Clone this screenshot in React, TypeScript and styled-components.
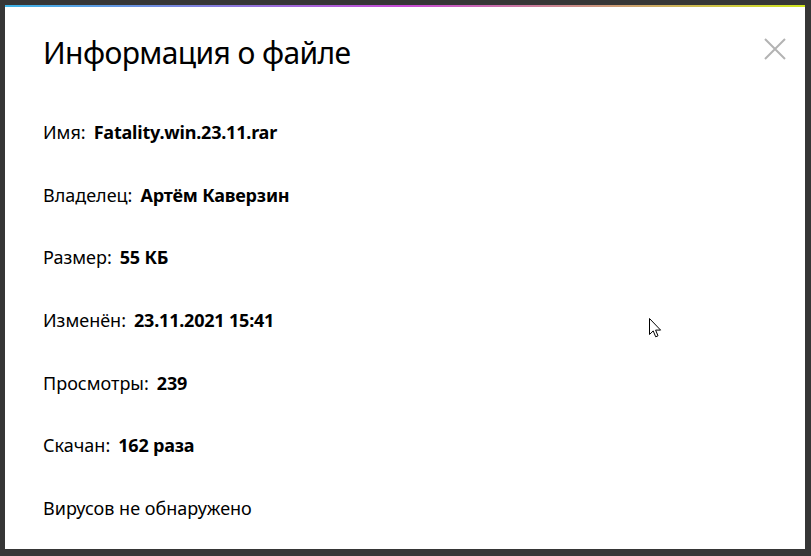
import styled, { createGlobalStyle } from "styled-components";

const GlobalStyle = createGlobalStyle`
  html, body {
    margin: 0;
    padding: 0;
    background: #363636;
  }
  body {
    font-family: "Noto Sans", "Open Sans", sans-serif;
  }
`;

const Frame = styled.div`
  width: 811px;
  height: 556px;
  box-sizing: border-box;
  padding: 5px 6px 7px 5px;
  background: #363636;
`;

const Dialog = styled.section`
  position: relative;
  height: 100%;
  box-sizing: border-box;
  background: #fff;
  border-top: 2px solid transparent;
  border-image: linear-gradient(90deg, #3cb4e6 0%, #c84bd6 50%, #d0e61e 100%) 1;
  border-left: 0;
  border-right: 0;
  border-bottom: 0;
  padding: 26px 38px 0 38px;
`;

const Header = styled.header`
  display: flex;
  justify-content: space-between;
  align-items: flex-start;
`;

const Title = styled.h1`
  margin: 0;
  font-size: 30px;
  line-height: 40px;
  letter-spacing: -0.6px;
  font-weight: 400;
  color: #000;
`;

const CloseButton = styled.button`
  margin: 5px -19px 0 0;
  padding: 0;
  border: 0;
  background: none;
  width: 22px;
  height: 22px;
  cursor: pointer;
  color: #b3b3b3;
`;

const InfoList = styled.dl`
  margin: 47px 0 0;
  display: flex;
  flex-direction: column;
  gap: 38.7px;
`;

const Row = styled.div`
  display: flex;
  gap: 8px;
  font-size: 18px;
  line-height: 24px;
  color: #000;
`;

const Label = styled.dt`
  margin: 0;
  font-weight: 400;
`;

const Value = styled.dd`
  margin: 0;
  font-weight: 700;
  letter-spacing: -0.2px;
`;

const Pointer = styled.svg`
  position: absolute;
  left: 644px;
  top: 311px;
`;

const rows = [
  ["Имя:", "Fatality.win.23.11.rar"],
  ["Владелец:", "Артём Каверзин"],
  ["Размер:", "55 КБ"],
  ["Изменён:", "23.11.2021 15:41"],
  ["Просмотры:", "239"],
  ["Скачан:", "162 раза"],
];

const App = () => {
  return (
    <>
      <GlobalStyle />
      <Frame>
        <Dialog>
          <Header>
            <Title>Информация о файле</Title>
            <CloseButton aria-label="Закрыть">
              <svg width="22" height="22" viewBox="0 0 22 22">
                <path
                  d="M1 1 L21 21 M21 1 L1 21"
                  stroke="currentColor"
                  strokeWidth="2"
                  fill="none"
                />
              </svg>
            </CloseButton>
          </Header>
          <InfoList>
            {rows.map(([label, value]) => (
              <Row key={label}>
                <Label>{label}</Label>
                <Value>{value}</Value>
              </Row>
            ))}
            <Row>
              <Label>Вирусов не обнаружено</Label>
            </Row>
          </InfoList>
          <Pointer width="13" height="21" viewBox="0 0 13 21">
            <path
              d="M0.5 0.5 L0.5 16.5 L4.2 12.9 L6.7 18.8 L9 17.8 L6.6 12.1 L11.6 12.1 Z"
              fill="#fff"
              stroke="#000"
              strokeWidth="1"
              strokeLinejoin="miter"
            />
          </Pointer>
        </Dialog>
      </Frame>
    </>
  );
};

export default App;
